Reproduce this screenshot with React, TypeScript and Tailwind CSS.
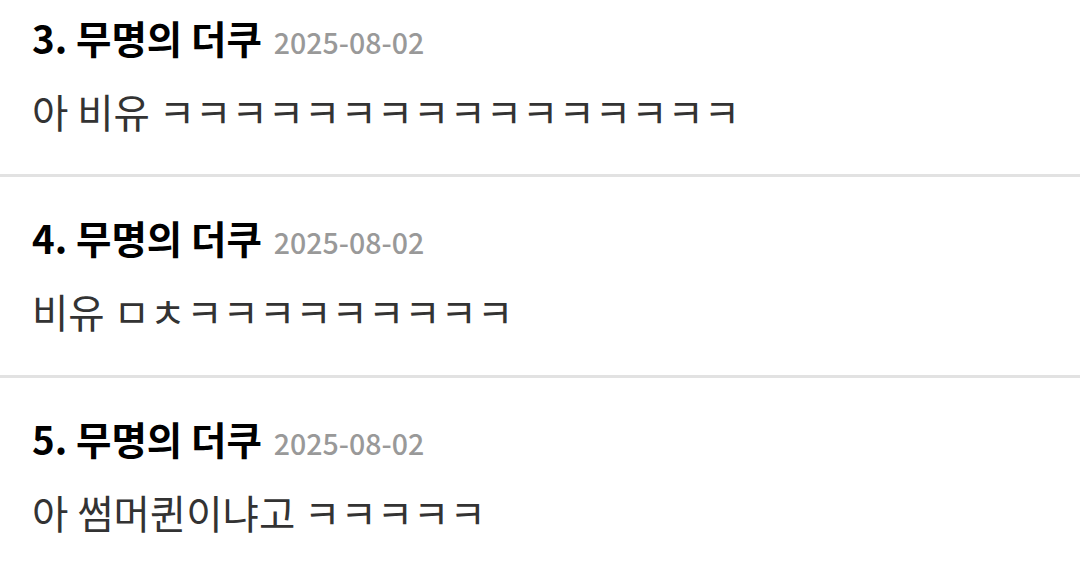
const comments = [
  { no: 3, name: "무명의 더쿠", date: "2025-08-02", text: "아 비유 ㅋㅋㅋㅋㅋㅋㅋㅋㅋㅋㅋㅋㅋㅋㅋㅋ" },
  { no: 4, name: "무명의 더쿠", date: "2025-08-02", text: "비유 ㅁㅊㅋㅋㅋㅋㅋㅋㅋㅋㅋ" },
  { no: 5, name: "무명의 더쿠", date: "2025-08-02", text: "아 썸머퀸이냐고 ㅋㅋㅋㅋㅋ" },
];

const App = () => {
  return (
    <div
      className="w-[1080px] h-[561px] overflow-hidden bg-white"
      style={{ fontFamily: '"Noto Sans CJK KR", "Noto Sans", sans-serif' }}
    >
      {comments.map((c, i) => (
        <div
          key={c.no}
          className={
            i === 0
              ? "px-[32px] pt-[15px] pb-[39px]"
              : "px-[32px] pt-[38px] pb-[40px] border-t-[3px] border-[#e2e2e2]"
          }
        >
          <div className="flex items-baseline h-[44px] leading-[44px]">
            <span className="text-[38.5px] font-bold text-black">
              {c.no}. {c.name}
            </span>
            <span className="ml-[12px] text-[28.5px] font-medium text-[#999999]">{c.date}</span>
          </div>
          <p className="mt-[28px] h-[48px] leading-[48px] text-[39.5px] text-[#333333]">{c.text}</p>
        </div>
      ))}
    </div>
  );
};

export default App;
